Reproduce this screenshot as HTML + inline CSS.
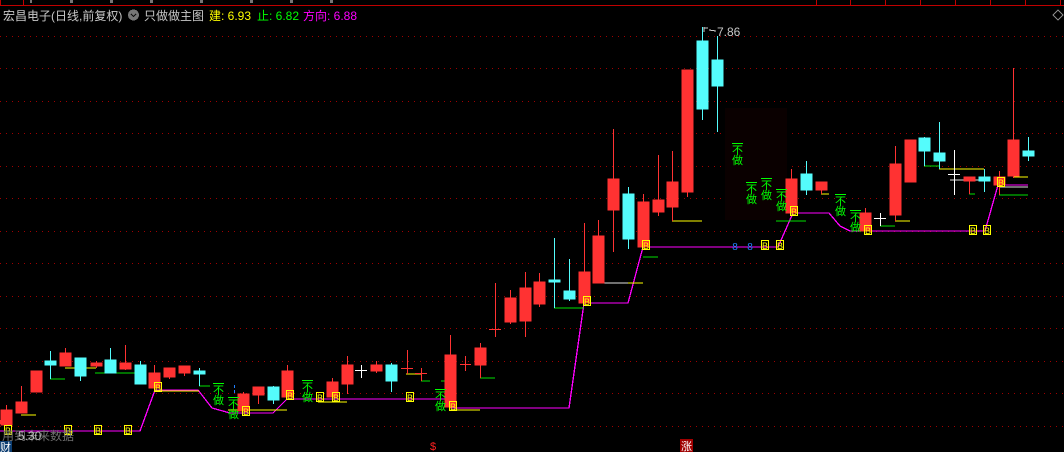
<!DOCTYPE html>
<html><head><meta charset="utf-8"><style>
html,body{margin:0;padding:0;background:#000;width:1064px;height:452px;overflow:hidden}
svg{display:block}
text{font-family:"Liberation Sans","Noto Sans CJK SC",sans-serif}
</style></head><body>
<svg width="1064" height="452" viewBox="0 0 1064 452" xmlns="http://www.w3.org/2000/svg" shape-rendering="crispEdges">
<rect width="1064" height="452" fill="#000"/>
<line x1="0" y1="5.5" x2="1064" y2="5.5" stroke="#c00000"/>
<rect x="0.5" y="-1" width="23" height="6.5" fill="none" stroke="#c00000"/>
<g stroke="#c00000"><line x1="816.5" y1="0" x2="816.5" y2="5"/><line x1="850.5" y1="0" x2="850.5" y2="5"/><line x1="885.5" y1="0" x2="885.5" y2="5"/><line x1="920.5" y1="0" x2="920.5" y2="5"/><line x1="955.5" y1="0" x2="955.5" y2="5"/><line x1="990.5" y1="0" x2="990.5" y2="5"/><line x1="1025.5" y1="0" x2="1025.5" y2="5"/><line x1="1060.5" y1="0" x2="1060.5" y2="5"/></g>
<g fill="#777"><rect x="30" y="0" width="2" height="3"/><rect x="70" y="0" width="3" height="3"/><rect x="110" y="0" width="3" height="3"/><rect x="150" y="0" width="3" height="3"/><rect x="200" y="0" width="3" height="3"/><rect x="250" y="0" width="3" height="3"/><rect x="290" y="0" width="3" height="3"/><rect x="330" y="0" width="3" height="3"/></g>
<path d="M1053 15 L1058 10 L1063 15 L1058 20 Z" fill="none" stroke="#888"/>
<g stroke="#a00000" stroke-dasharray="1 5">
<line x1="0" y1="36.5" x2="1064" y2="36.5"/><line x1="0" y1="68.5" x2="1064" y2="68.5"/><line x1="0" y1="101.5" x2="1064" y2="101.5"/><line x1="0" y1="133.5" x2="1064" y2="133.5"/><line x1="0" y1="166.5" x2="1064" y2="166.5"/><line x1="0" y1="198.5" x2="1064" y2="198.5"/><line x1="0" y1="231.5" x2="1064" y2="231.5"/><line x1="0" y1="263.5" x2="1064" y2="263.5"/><line x1="0" y1="296.5" x2="1064" y2="296.5"/><line x1="0" y1="328.5" x2="1064" y2="328.5"/><line x1="0" y1="361.5" x2="1064" y2="361.5"/><line x1="0" y1="393.5" x2="1064" y2="393.5"/><line x1="0" y1="426.5" x2="1064" y2="426.5"/>
</g>
<rect x="725" y="108" width="62" height="112" fill="#0a0000"/>
<text x="3" y="20" font-size="12" fill="#c8c8c8">宏昌电子(日线,前复权)</text>
<circle cx="133.5" cy="15" r="5.5" fill="#777"/><path d="M131 14 L133.5 16.5 L136 14" stroke="#111" stroke-width="1.3" fill="none"/>
<text x="144" y="20" font-size="12" fill="#c8c8c8">只做做主图</text>
<text x="209" y="20" font-size="12" fill="#ffff00">建: 6.93</text>
<text x="257" y="20" font-size="12" fill="#00ff00">止: 6.82</text>
<text x="303" y="20" font-size="12" fill="#ff00ff">方向: 6.88</text>
<path d="M704 27 L704 32 M704 28 L708 28 M709 30 L716 31" stroke="#ccc" fill="none"/>
<text x="717" y="36" font-size="12" fill="#c8c8c8">7.86</text>
<polyline fill="none" stroke="#ff00ff" stroke-width="1.3" points="0,431 140,431 155,390 198,390 212,408 230,413 273,413 287,399 447,399 452,408 569,408 584,303 628,303 643,247 778,247 793,213 829,213 840,226 850,231 985,231 998,185 1028,185"/>
<g stroke-width="1.3">
<line x1="21" y1="415" x2="36" y2="415" stroke="#ffff00"/>
<line x1="50" y1="379" x2="65" y2="379" stroke="#00e000"/>
<line x1="65" y1="368" x2="96" y2="368" stroke="#ffff00"/>
<line x1="95" y1="373" x2="139" y2="373" stroke="#00e000"/>
<line x1="155" y1="391" x2="199" y2="391" stroke="#ffff00"/>
<line x1="199" y1="386" x2="210" y2="386" stroke="#00e000"/>
<line x1="228" y1="410" x2="287" y2="410" stroke="#ffff00"/>
<line x1="318" y1="402" x2="347" y2="402" stroke="#ffff00"/>
<line x1="406" y1="374" x2="422" y2="374" stroke="#ffff00"/>
<line x1="421" y1="381" x2="430" y2="381" stroke="#00e000"/>
<line x1="441" y1="381" x2="450" y2="381" stroke="#00e000"/>
<line x1="451" y1="410" x2="480" y2="410" stroke="#ffff00"/>
<line x1="480" y1="378" x2="495" y2="378" stroke="#00e000"/>
<line x1="554" y1="308" x2="584" y2="308" stroke="#00e000"/>
<line x1="598" y1="283" x2="643" y2="283" stroke="#ffff00"/>
<line x1="643" y1="257" x2="658" y2="257" stroke="#00e000"/>
<line x1="672" y1="221" x2="702" y2="221" stroke="#ffff00"/>
<line x1="776" y1="221" x2="806" y2="221" stroke="#00e000"/>
<line x1="821" y1="194" x2="829" y2="194" stroke="#ffff00"/>
<line x1="880" y1="226" x2="895" y2="226" stroke="#00e000"/>
<line x1="895" y1="221" x2="910" y2="221" stroke="#ffff00"/>
<line x1="924" y1="166" x2="939" y2="166" stroke="#00e000"/>
<line x1="939" y1="169" x2="984" y2="169" stroke="#ffff00"/>
<line x1="969" y1="194" x2="975" y2="194" stroke="#00e000"/>
<line x1="1013" y1="177" x2="1028" y2="177" stroke="#ffff00"/>
<line x1="999" y1="195" x2="1028" y2="195" stroke="#00e000"/>
<line x1="950" y1="180" x2="990" y2="180" stroke="#e0e0e0"/>
<line x1="1000" y1="187" x2="1028" y2="187" stroke="#e0e0e0"/>
<line x1="600" y1="283" x2="628" y2="283" stroke="#e0e0e0"/>
</g>
<g>
<g stroke="#ff3232" fill="#ff3232">
<line x1="6.5" y1="405" x2="6.5" y2="425"/><rect x="1" y="410" width="11" height="15"/>
<line x1="21.5" y1="386" x2="21.5" y2="413"/><rect x="16" y="402" width="11" height="11"/>
<rect x="31" y="371" width="11" height="21"/>
<line x1="65.5" y1="348" x2="65.5" y2="366"/><rect x="60" y="353" width="11" height="13"/>
<line x1="96.5" y1="361" x2="96.5" y2="368"/><rect x="91" y="363" width="11" height="3"/>
<line x1="125.5" y1="345" x2="125.5" y2="370"/><rect x="120" y="363" width="11" height="6"/>
<line x1="154.5" y1="365" x2="154.5" y2="388"/><rect x="149" y="373" width="11" height="15"/>
<line x1="169.5" y1="368" x2="169.5" y2="379"/><rect x="164" y="368" width="11" height="9"/>
<line x1="184.5" y1="366" x2="184.5" y2="376"/><rect x="179" y="366" width="11" height="7"/>
<line x1="243.5" y1="392" x2="243.5" y2="411"/><rect x="238" y="394" width="11" height="17"/>
<line x1="258.5" y1="387" x2="258.5" y2="404"/><rect x="253" y="387" width="11" height="8"/>
<line x1="287.5" y1="365" x2="287.5" y2="397"/><rect x="282" y="371" width="11" height="26"/>
<line x1="332.5" y1="378" x2="332.5" y2="397"/><rect x="327" y="382" width="11" height="15"/>
<line x1="347.5" y1="356" x2="347.5" y2="394"/><rect x="342" y="365" width="11" height="19"/>
<line x1="376.5" y1="361" x2="376.5" y2="373"/><rect x="371" y="365" width="11" height="6"/>
<line x1="407.5" y1="350" x2="407.5" y2="374"/><line x1="401" y1="368.5" x2="413" y2="368.5"/>
<line x1="421.5" y1="368" x2="421.5" y2="381"/><line x1="415" y1="373.5" x2="427" y2="373.5"/>
<line x1="450.5" y1="335" x2="450.5" y2="408"/><rect x="445" y="355" width="11" height="52"/>
<line x1="465.5" y1="356" x2="465.5" y2="371"/><line x1="460" y1="364.5" x2="471" y2="364.5"/>
<line x1="480.5" y1="343" x2="480.5" y2="378"/><rect x="475" y="348" width="11" height="17"/>
<line x1="495.5" y1="283" x2="495.5" y2="337"/><line x1="489" y1="329.5" x2="501" y2="329.5"/>
<line x1="510.5" y1="290" x2="510.5" y2="324"/><rect x="505" y="298" width="11" height="24"/>
<line x1="525.5" y1="272" x2="525.5" y2="337"/><rect x="520" y="288" width="11" height="33"/>
<line x1="539.5" y1="273" x2="539.5" y2="307"/><rect x="534" y="282" width="11" height="22"/>
<line x1="584.5" y1="223" x2="584.5" y2="303"/><rect x="579" y="272" width="11" height="31"/>
<line x1="598.5" y1="220" x2="598.5" y2="283"/><rect x="593" y="236" width="11" height="47"/>
<line x1="613.5" y1="129" x2="613.5" y2="252"/><rect x="608" y="179" width="11" height="31"/>
<line x1="643.5" y1="194" x2="643.5" y2="247"/><rect x="638" y="202" width="11" height="45"/>
<line x1="658.5" y1="155" x2="658.5" y2="216"/><rect x="653" y="200" width="11" height="12"/>
<line x1="672.5" y1="151" x2="672.5" y2="221"/><rect x="667" y="182" width="11" height="25"/>
<line x1="687.5" y1="70" x2="687.5" y2="197"/><rect x="682" y="70" width="11" height="122"/>
<line x1="791.5" y1="169" x2="791.5" y2="213"/><rect x="786" y="179" width="11" height="34"/>
<line x1="821.5" y1="182" x2="821.5" y2="194"/><rect x="816" y="182" width="11" height="8"/>
<line x1="865.5" y1="208" x2="865.5" y2="231"/><rect x="860" y="213" width="11" height="18"/>
<line x1="895.5" y1="146" x2="895.5" y2="221"/><rect x="890" y="164" width="11" height="51"/>
<rect x="905" y="140" width="11" height="42"/>
<line x1="969.5" y1="177" x2="969.5" y2="194"/><rect x="964" y="177" width="11" height="4"/>
<line x1="999.5" y1="171" x2="999.5" y2="195"/><rect x="994" y="177" width="11" height="8"/>
<line x1="1013.5" y1="68" x2="1013.5" y2="178"/><rect x="1008" y="140" width="11" height="36"/>
</g>
<g stroke="#54fcfc" fill="#54fcfc">
<line x1="50.5" y1="351" x2="50.5" y2="379"/><rect x="45" y="361" width="11" height="4"/>
<line x1="80.5" y1="358" x2="80.5" y2="381"/><rect x="75" y="358" width="11" height="18"/>
<line x1="110.5" y1="348" x2="110.5" y2="373"/><rect x="105" y="360" width="11" height="13"/>
<line x1="140.5" y1="361" x2="140.5" y2="384"/><rect x="135" y="365" width="11" height="19"/>
<line x1="199.5" y1="368" x2="199.5" y2="386"/><rect x="194" y="371" width="11" height="3"/>
<line x1="273.5" y1="386" x2="273.5" y2="404"/><rect x="268" y="387" width="11" height="13"/>
<line x1="391.5" y1="363" x2="391.5" y2="392"/><rect x="386" y="365" width="11" height="16"/>
<line x1="554.5" y1="238" x2="554.5" y2="308"/><rect x="549" y="280" width="11" height="2"/>
<line x1="569.5" y1="259" x2="569.5" y2="301"/><rect x="564" y="291" width="11" height="8"/>
<line x1="628.5" y1="187" x2="628.5" y2="249"/><rect x="623" y="194" width="11" height="45"/>
<line x1="702.5" y1="27" x2="702.5" y2="120"/><rect x="697" y="41" width="11" height="68"/>
<line x1="717.5" y1="36" x2="717.5" y2="132"/><rect x="712" y="60" width="11" height="26"/>
<line x1="806.5" y1="161" x2="806.5" y2="195"/><rect x="801" y="174" width="11" height="16"/>
<line x1="924.5" y1="137" x2="924.5" y2="166"/><rect x="919" y="138" width="11" height="13"/>
<line x1="939.5" y1="122" x2="939.5" y2="169"/><rect x="934" y="153" width="11" height="8"/>
<line x1="984.5" y1="169" x2="984.5" y2="192"/><rect x="979" y="177" width="11" height="4"/>
<line x1="1028.5" y1="137" x2="1028.5" y2="161"/><rect x="1023" y="151" width="11" height="5"/>
</g>
<g stroke="#ffffff">
<line x1="361.5" y1="365" x2="361.5" y2="378"/><line x1="355" y1="370.5" x2="367" y2="370.5"/>
<line x1="880.5" y1="213" x2="880.5" y2="226"/><line x1="874" y1="218.5" x2="886" y2="218.5"/>
<line x1="954.5" y1="150" x2="954.5" y2="195"/><line x1="948" y1="174.5" x2="960" y2="174.5"/>
</g>
</g>
<g fill="#00ff00" font-size="11" text-anchor="middle" stroke="#00ff00" stroke-width="0">
<g><line x1="213" y1="383.5" x2="224" y2="383.5" stroke-width="1"/><text x="218.5" y="394">不</text><text x="218.5" y="404">做</text></g>
<g><line x1="228" y1="397.5" x2="239" y2="397.5" stroke-width="1"/><text x="233.5" y="408">不</text><text x="233.5" y="418">做</text></g>
<g><line x1="302" y1="380.5" x2="313" y2="380.5" stroke-width="1"/><text x="307.5" y="391">不</text><text x="307.5" y="401">做</text></g>
<g><line x1="435" y1="389.5" x2="446" y2="389.5" stroke-width="1"/><text x="440.5" y="400">不</text><text x="440.5" y="410">做</text></g>
<g><line x1="732" y1="143.5" x2="743" y2="143.5" stroke-width="1"/><text x="737.5" y="154">不</text><text x="737.5" y="164">做</text></g>
<g><line x1="746" y1="182.5" x2="757" y2="182.5" stroke-width="1"/><text x="751.5" y="193">不</text><text x="751.5" y="203">做</text></g>
<g><line x1="761" y1="178.5" x2="772" y2="178.5" stroke-width="1"/><text x="766.5" y="189">不</text><text x="766.5" y="199">做</text></g>
<g><line x1="776" y1="189.5" x2="787" y2="189.5" stroke-width="1"/><text x="781.5" y="200">不</text><text x="781.5" y="210">做</text></g>
<g><line x1="835" y1="194.5" x2="846" y2="194.5" stroke-width="1"/><text x="840.5" y="205">不</text><text x="840.5" y="215">做</text></g>
<g><line x1="850" y1="210.5" x2="861" y2="210.5" stroke-width="1"/><text x="855.5" y="221">不</text><text x="855.5" y="231">做</text></g>
</g>
<line x1="234.5" y1="385" x2="234.5" y2="394" stroke="#2080ff" stroke-dasharray="3 2"/>
<g fill="none" stroke="#ffff00">
<rect x="4.5" y="425.5" width="7" height="9"/><rect x="64.5" y="425.5" width="7" height="9"/><rect x="94.5" y="425.5" width="7" height="9"/><rect x="124.5" y="425.5" width="7" height="9"/>
<rect x="154.5" y="382.5" width="7" height="9"/><rect x="242.5" y="406.5" width="7" height="9"/><rect x="286.5" y="390.5" width="7" height="9"/><rect x="316.5" y="392.5" width="7" height="9"/><rect x="332.5" y="392.5" width="7" height="9"/>
<rect x="406.5" y="392.5" width="7" height="9"/><rect x="449.5" y="401.5" width="7" height="9"/><rect x="583.5" y="296.5" width="7" height="9"/><rect x="642.5" y="240.5" width="7" height="9"/>
<rect x="761.5" y="240.5" width="7" height="9"/><rect x="776.5" y="240.5" width="7" height="9"/><rect x="790.5" y="206.5" width="7" height="9"/><rect x="864.5" y="225.5" width="7" height="9"/>
<rect x="969.5" y="225.5" width="7" height="9"/><rect x="983.5" y="225.5" width="7" height="9"/><rect x="997.5" y="177.5" width="7" height="9"/>
</g>
<g fill="#ffff00" font-size="9" font-family="Liberation Mono" text-anchor="middle">
<text x="8" y="434">B</text><text x="68" y="434">B</text><text x="98" y="434">B</text><text x="128" y="434">B</text>
<text x="158" y="391">B</text><text x="246" y="415">B</text><text x="290" y="399">B</text><text x="320" y="401">B</text><text x="336" y="401">B</text>
<text x="410" y="401">B</text><text x="453" y="410">B</text><text x="587" y="305">B</text><text x="646" y="249">B</text>
<text x="765" y="249">B</text><text x="780" y="249">B</text><text x="794" y="215">B</text><text x="868" y="234">B</text>
<text x="973" y="234">B</text><text x="987" y="234">B</text><text x="1001" y="186">B</text>
</g>
<g fill="#2080ff" font-size="10" font-family="Liberation Mono" text-anchor="middle"><text x="735" y="250">8</text><text x="750" y="250">8</text></g>
<text x="2" y="440" font-size="12" fill="#707070">用到未来数据</text>
<text x="18" y="440" font-size="12" fill="#bbbbbb">5.30</text>
<rect x="0" y="441" width="12" height="11" fill="#0b3c70"/>
<text x="0" y="451" font-size="11" fill="#fff">财</text>
<text x="433" y="450" font-size="11" fill="#ff2020" text-anchor="middle">$</text>
<rect x="680" y="439" width="13" height="13" fill="#a00000"/>
<text x="686.5" y="450" font-size="11" fill="#fff" text-anchor="middle">涨</text>
<rect x="0" y="420" width="12" height="4" fill="#ff3232"/>
</svg>
</body></html>
